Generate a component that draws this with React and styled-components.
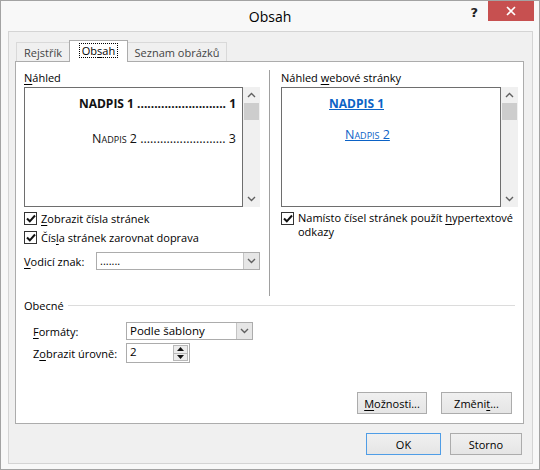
import React from 'react';
import styled, { createGlobalStyle } from 'styled-components';

const Global = createGlobalStyle`
  *, *::before, *::after { box-sizing: border-box; }
  html, body { margin: 0; padding: 0; background: #f7f7f7; }
  body { font-family: "Open Sans", "Noto Sans", Arial, sans-serif; font-size: 11px; color: #000; }
  u { text-underline-offset: 2px; }
`;

const Window = styled.div`
  width: 540px; height: 470px; border: 1px solid #a3a3a3; background: #f8f8f8;
  display: flex; flex-direction: column;
`;

const TitleBar = styled.div`
  height: 30px; display: grid; grid-template-columns: 1fr auto 1fr; align-items: center;
`;

const Title = styled.div`
  grid-column: 2; font-size: 14px; color: #000; line-height: 20px; padding-top: 1px;
`;

const Controls = styled.div`
  grid-column: 3; justify-self: end; align-self: start; display: flex; align-items: flex-start;
  margin-right: 5px;
`;

const Help = styled.div`
  font-weight: 700; font-size: 13px; line-height: 14px; margin-top: 5px; margin-right: 10px; color: #222;
  font-family: "DejaVu Sans", sans-serif;
`;

const Close = styled.div`
  width: 46px; height: 20px; background: #c75050; display: flex; align-items: center; justify-content: center;
`;

const Dialog = styled.div`
  margin: 0 6px 0 7px; height: 433px; border: 1px solid #d4d4d4; background: #f0f0f0;
  padding: 8px 8px 0 6px; display: flex; flex-direction: column;
`;

const TabRow = styled.div`
  height: 21px; display: flex; align-items: flex-end; padding-left: 1px;
`;

const Tab = styled.div`
  height: ${p => (p.$active ? '22px' : '19px')};
  margin-bottom: ${p => (p.$active ? '-1px' : '0')};
  width: ${p => p.$w}px;
  background: ${p => (p.$active ? '#fff' : '#f0f0f0')};
  border: 1px solid ${p => (p.$active ? '#acacac' : '#d9d9d9')};
  border-bottom: none;
  ${p => (p.$noLeft ? 'border-left: none;' : '')}
  ${p => (p.$noRight ? 'border-right: none;' : '')}
  position: relative; z-index: ${p => (p.$active ? 2 : 1)};
  display: flex; align-items: center; justify-content: center;
  color: ${p => (p.$active ? '#000' : '#444')};
  padding-bottom: ${p => (p.$active ? '2px' : '0')};
`;

const Focus = styled.span`
  outline: 1px dotted #000; padding: 0 2px; line-height: 13px;
`;

const Panel = styled.div`
  height: 363px; background: #fff; border: 1px solid #acacac; position: relative; z-index: 1;
  padding: 8px 5px 9px 8px; display: flex; flex-direction: column;
`;

const TopSection = styled.div`
  height: 226px; display: flex;
`;

const Col = styled.div`
  width: ${p => p.$w}px; flex: none; min-width: 0; display: flex; flex-direction: column;
`;

const Divider = styled.div`
  width: 1px; flex: none; background: #a0a0a0; margin: 0 11px 0 9px;
`;

const Label = styled.div`
  line-height: 15px; white-space: nowrap;
`;

const PreviewRow = styled.div`
  margin-top: 2px; height: 120px; display: flex;
`;

const PreviewBox = styled.div`
  flex: 1; min-width: 0; overflow: hidden; border: 1px solid #6e6e6e; background: #fff; padding-top: 8px;
`;

const Line = styled.div`
  height: 15px; line-height: 15px; white-space: nowrap; text-align: right;
  padding-right: 6px; margin-top: ${p => p.$mt || 0}px;
  font-size: ${p => (p.$bold ? '12px' : '12.5px')};
  font-weight: ${p => (p.$bold ? 700 : 400)};
  font-variant: ${p => (p.$caps ? 'small-caps' : 'normal')};
  color: #111;
`;

const LinkLine = styled.div`
  height: 15px; line-height: 15px; white-space: nowrap; padding-left: ${p => p.$pl}px;
  margin-top: ${p => p.$mt || 0}px; color: #0b62c6; text-decoration: underline;
  font-size: ${p => (p.$bold ? '12px' : '12.5px')};
  font-weight: ${p => (p.$bold ? 700 : 400)};
  font-variant: ${p => (p.$caps ? 'small-caps' : 'normal')};
`;

const ScrollBar = styled.div`
  width: 17px; flex: none; background: #f0f0f0; display: flex; flex-direction: column; align-items: center;
`;

const ScrollArrow = styled.div`
  height: 16px; width: 100%; display: flex; align-items: center; justify-content: center;
`;

const Thumb = styled.div`
  height: 17px; width: 15px; background: #cdcdcd;
`;

const ScrollSpace = styled.div`
  flex: 1;
`;

const CheckRow = styled.div`
  display: flex; align-items: ${p => (p.$top ? 'flex-start' : 'center')};
  min-height: 19px; margin-top: ${p => p.$mt || 0}px;
`;

const Box = styled.div`
  width: 13px; height: 13px; border: 1px solid #333; background: #fff; flex: none;
  display: flex; align-items: center; justify-content: center;
  margin-top: ${p => (p.$top ? '3px' : '0')};
`;

const CheckText = styled.div`
  margin-left: 4px; line-height: 14px; padding-top: ${p => (p.$top ? '2px' : '0')};
`;

const FieldRow = styled.div`
  display: flex; align-items: center; margin-top: ${p => p.$mt}px; padding-left: ${p => p.$pl || 0}px;
`;

const FieldLabel = styled.div`
  width: ${p => p.$w}px; flex: none; white-space: nowrap;
`;

const Combo = styled.div`
  width: ${p => p.$w}px; height: 18px; border: 1px solid #acacac; background: #fff; display: flex;
`;

const ComboText = styled.div`
  flex: 1; padding-left: 3px; line-height: 16px; font-size: ${p => p.$fs || 11}px;
`;

const ComboButton = styled.div`
  width: 16px; background: #e6e6e6; border-left: 1px solid #c4c4c4;
  display: flex; align-items: center; justify-content: center;
`;

const Spin = styled.div`
  width: 64px; height: 20px; border: 1px solid #acacac; background: #fff; display: flex;
`;

const SpinButtons = styled.div`
  width: 16px; display: flex; flex-direction: column; padding: 1px 1px 1px 0;
`;

const SpinBtn = styled.div`
  flex: 1; border: 1px solid #b8b8b8; background: #ececec; display: flex; align-items: center; justify-content: center;
  & + & { margin-top: -1px; }
`;

const GroupHeader = styled.div`
  display: flex; align-items: center; margin-top: 2px; line-height: 15px; margin-right: 3px;
`;

const Rule = styled.div`
  flex: 1; height: 1px; background: #dcdcdc; margin-left: 4px;
`;

const ButtonRow = styled.div`
  display: flex; justify-content: flex-end; gap: ${p => p.$gap}px;
  margin-top: ${p => p.$mt}; margin-right: ${p => p.$mr}px;
`;

const Button = styled.div`
  width: ${p => p.$w}px; height: 22px; display: flex; align-items: center; justify-content: center;
  background: linear-gradient(#f0f0f0, #e5e5e5);
  border: 1px solid ${p => (p.$default ? '#4f9de6' : '#acacac')};
  color: #000;
`;

const Check = () => (
  <svg width="10" height="9" viewBox="0 0 10 9">
    <path d="M1 4.5 L3.8 7.3 L9 1.5" fill="none" stroke="#111" strokeWidth="2" />
  </svg>
);

const Chevron = ({ up }) => (
  <svg width="9" height="6" viewBox="0 0 9 6">
    <path d={up ? 'M1 5 L4.5 1.5 L8 5' : 'M1 1 L4.5 4.5 L8 1'} fill="none" stroke="#606060" strokeWidth="1.4" />
  </svg>
);

const Tri = ({ up }) => (
  <svg width="7" height="4" viewBox="0 0 7 4">
    <path d={up ? 'M0 4 L3.5 0 L7 4 Z' : 'M0 0 L3.5 4 L7 0 Z'} fill="#111" />
  </svg>
);

const Scroll = () => (
  <ScrollBar>
    <ScrollArrow><Chevron up /></ScrollArrow>
    <Thumb />
    <ScrollSpace />
    <ScrollArrow><Chevron /></ScrollArrow>
  </ScrollBar>
);

export default function App() {
  return (
    <>
      <Global />
      <Window>
        <TitleBar>
          <Title>Obsah</Title>
          <Controls>
            <Help>?</Help>
            <Close>
              <svg width="10" height="10" viewBox="0 0 10 10">
                <path d="M1 1 L9 9 M9 1 L1 9" stroke="#fff" strokeWidth="1.6" />
              </svg>
            </Close>
          </Controls>
        </TitleBar>
        <Dialog>
          <TabRow>
            <Tab $w={53} $noRight>Rejstřík</Tab>
            <Tab $w={59} $active><Focus>Ob<u>s</u>ah</Focus></Tab>
            <Tab $w={99} $noLeft>Seznam obrázků</Tab>
          </TabRow>
          <Panel>
            <TopSection>
              <Col $w={236}>
                <Label><u>N</u>áhled</Label>
                <PreviewRow>
                  <PreviewBox>
                    <Line $bold>NADPIS 1 .......................... 1</Line>
                    <Line $mt={20} $caps>Nadpis 2 .......................... 3</Line>
                  </PreviewBox>
                  <Scroll />
                </PreviewRow>
                <CheckRow $mt={2}>
                  <Box><Check /></Box>
                  <CheckText><u>Z</u>obrazit čísla stránek</CheckText>
                </CheckRow>
                <CheckRow>
                  <Box><Check /></Box>
                  <CheckText>Čís<u>l</u>a stránek zarovnat doprava</CheckText>
                </CheckRow>
                <FieldRow $mt={5}>
                  <FieldLabel $w={72}><u>V</u>odicí znak:</FieldLabel>
                  <Combo $w={164}>
                    <ComboText>.......</ComboText>
                    <ComboButton><Chevron /></ComboButton>
                  </Combo>
                </FieldRow>
              </Col>
              <Divider />
              <Col $w={237}>
                <Label>Náhled <u>w</u>ebové stránky</Label>
                <PreviewRow>
                  <PreviewBox>
                    <LinkLine $pl={47} $bold>NADPIS 1</LinkLine>
                    <LinkLine $pl={63} $mt={16} $caps>Nadpis 2</LinkLine>
                  </PreviewBox>
                  <Scroll />
                </PreviewRow>
                <CheckRow $mt={2} $top>
                  <Box $top><Check /></Box>
                  <CheckText $top>Namísto čísel stránek použít <u>h</u>ypertextové<br />odkazy</CheckText>
                </CheckRow>
              </Col>
            </TopSection>
            <GroupHeader>Obecné<Rule /></GroupHeader>
            <FieldRow $mt={9} $pl={9}>
              <FieldLabel $w={93}><u>F</u>ormáty:</FieldLabel>
              <Combo $w={127}>
                <ComboText $fs={11.5}>Podle šablony</ComboText>
                <ComboButton><Chevron /></ComboButton>
              </Combo>
            </FieldRow>
            <FieldRow $mt={3} $pl={9}>
              <FieldLabel $w={93}>Z<u>o</u>brazit úrovně:</FieldLabel>
              <Spin>
                <ComboText $fs={11.5}>2</ComboText>
                <SpinButtons>
                  <SpinBtn><Tri up /></SpinBtn>
                  <SpinBtn><Tri /></SpinBtn>
                </SpinButtons>
              </Spin>
            </FieldRow>
            <ButtonRow $mt="auto" $mr={6} $gap={14}>
              <Button $w={70}><u>M</u>ožnosti...</Button>
              <Button $w={71}>Změni<u>t</u>...</Button>
            </ButtonRow>
          </Panel>
          <ButtonRow $mt="9px" $mr={2} $gap={9}>
            <Button $w={75} $default>OK</Button>
            <Button $w={72}>Storno</Button>
          </ButtonRow>
        </Dialog>
      </Window>
    </>
  );
}
